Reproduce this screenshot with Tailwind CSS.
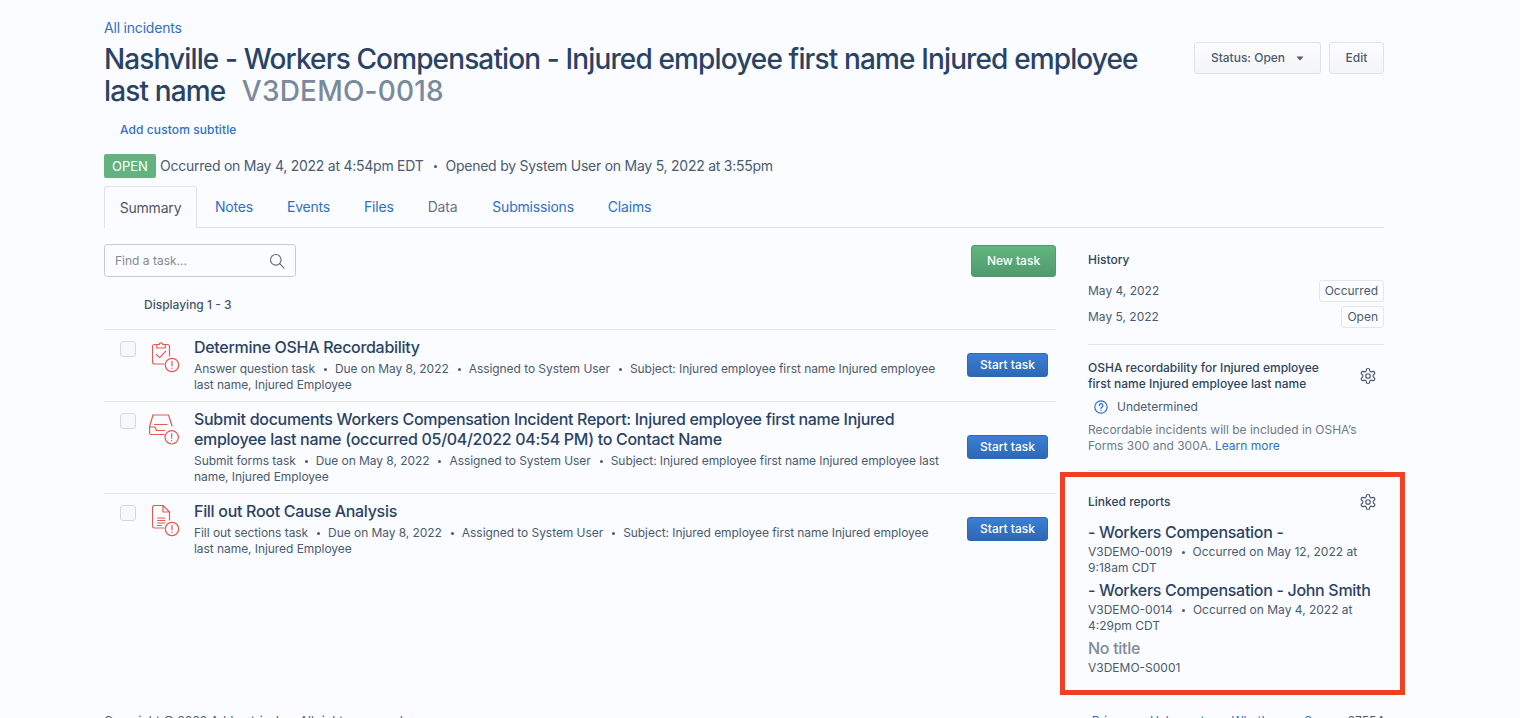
<!DOCTYPE html>
<html>
<head>
<meta charset="utf-8">
<script src="https://cdn.jsdelivr.net/npm/@tailwindcss/browser@4"></script>
</head>
<body class="bg-[#fbfcff] font-['Inter',sans-serif] text-[#2c4563] h-[718px] overflow-hidden relative">
<div class="w-[1280px] ml-[104px] pt-[19px]">
  <a class="block text-[14px] leading-[18px] tracking-[-0.2px] text-[#2f6fc7]">All incidents</a>
  <div class="flex justify-between items-start mt-[3px]">
    <h1 class="w-[1060px] mt-[3px] text-[28px] leading-[32px] font-medium tracking-[-0.87px] text-[#2a4365]">Nashville - Workers Compensation - Injured employee first name Injured employee last name <span class="ml-[10px] text-[#7b8a9a] tracking-[0.2px]">V3DEMO-0018</span></h1>
    <div class="flex gap-[8px] mt-[2px]">
      <button class="h-[32px] w-[127px] flex items-center justify-center gap-[11px] rounded-[3px] border border-[#dfe3e8] bg-gradient-to-b from-[#fcfcfd] to-[#f4f5f7] text-[12px] font-medium text-[#4a5b70]">Status: Open <svg width="8" height="5" viewBox="0 0 8 5"><path d="M0.5 0.5h7L4 4.5z" fill="#4a5b70"/></svg></button>
      <button class="h-[32px] w-[55px] rounded-[3px] border border-[#dfe3e8] bg-gradient-to-b from-[#fcfcfd] to-[#f4f5f7] text-[12px] font-medium text-[#4a5b70]">Edit</button>
    </div>
  </div>
  <a class="block ml-[16px] mt-[14px] text-[12px] leading-[18px] font-medium tracking-[0.1px] text-[#2f6fc7]">Add custom subtitle</a>
  <div class="flex items-center mt-[15px] h-[24px] text-[14px] tracking-[-0.25px] text-[#4a5b70]">
    <span class="w-[52px] h-[24px] pt-[1px] mr-[4px] flex items-center justify-center rounded-[2px] bg-[#62b37f] text-white text-[13px] tracking-normal">OPEN</span>
    <span class="mb-[2px]">Occurred on May 4, 2022 at 4:54pm EDT</span><span class="inline-block w-[3px] h-[3px] ml-[10px] mr-[9px] rounded-full bg-current"></span><span class="mb-[2px]">Opened by System User on May 5, 2022 at 3:55pm</span>
  </div>
  <div class="flex items-end mt-[8px] h-[42px] border-b border-[#dfe3e8] text-[14px] tracking-[-0.2px] text-[#2f6fc7]">
    <div class="h-[42px] w-[93px] -mb-px flex items-center justify-center rounded-t-[3px] border border-b-0 border-[#dfe3e8] bg-[#fbfcff] text-[#4d5663]">Summary</div>
    <div class="h-[41px] flex items-center ml-[18px]">Notes</div>
    <div class="h-[41px] flex items-center ml-[34px]">Events</div>
    <div class="h-[41px] flex items-center ml-[34px]">Files</div>
    <div class="h-[41px] flex items-center ml-[34px] text-[#6b7280]">Data</div>
    <div class="h-[41px] flex items-center ml-[35px]">Submissions</div>
    <div class="h-[41px] flex items-center ml-[34px]">Claims</div>
  </div>
  <div class="flex justify-between mt-[16px]">
    <main class="w-[952px]">
      <div class="flex justify-between items-start">
        <div class="w-[192px] h-[33px] px-[10px] flex items-center justify-between rounded-[3px] border border-[#c9ccd1] text-[12px] text-[#85898f]">
          <span>Find a task...</span>
          <svg width="16" height="16" viewBox="0 0 16 16" fill="none" stroke="#5f6b78" stroke-width="1.1"><circle cx="6.8" cy="6.8" r="5.3"/><path d="M10.7 10.7l4.6 4.6"/></svg>
        </div>
        <button class="h-[32px] w-[85px] mt-[1px] rounded-[3px] border border-[#55996f] bg-gradient-to-b from-[#62b67f] to-[#509a6d] text-[12px] font-medium text-white">New task</button>
      </div>
      <div class="mt-[12px] ml-[40px] h-[32px] text-[12px] leading-[32px] font-medium text-[#44566c]">Displaying 1 - 3</div>
      <div class="mt-[8px]">
        <div class="flex h-[72px] border-t border-[#e3e6ea]">
          <div class="w-[16px] h-[16px] ml-[16px] mt-[11px] rounded-[3px] border border-[#d5d8dd] bg-[#f7f8fa]"></div>
          <div class="w-[58px] pl-[16px] pt-[11px]">
            <svg width="28" height="32" viewBox="0 0 28 32" fill="none" stroke="#e25a53" stroke-width="1.2" stroke-linecap="round" stroke-linejoin="round"><path d="M4.8 3.5H2.5a2 2 0 0 0-2 2V21a2 2 0 0 0 2 2H12"/><path d="M13.2 3.5h2.3a2 2 0 0 1 2 2V15"/><path d="M4.8 7V3.5h2.5a1.7 1.7 0 0 1 3.4 0h2.5V7z"/><path d="M4.5 13.5l3.2 3.2 6-6.5"/><circle cx="20" cy="24" r="6.7"/><path d="M20 20.3v4.5M20 27v.5"/></svg>
          </div>
          <div class="w-[752px] pt-[7px]">
            <div class="text-[16px] leading-[20px] font-medium tracking-[-0.3px] text-[#2a4365]">Determine OSHA Recordability</div>
            <div class="mt-[4px] text-[12px] leading-[16px] tracking-[-0.06px] text-[#4a5b70]">Answer question task<span class="inline-block w-[3px] h-[3px] ml-[9px] mr-[8px] mb-[2px] rounded-full bg-current"></span>Due on May 8, 2022<span class="inline-block w-[3px] h-[3px] ml-[9px] mr-[8px] mb-[2px] rounded-full bg-current"></span>Assigned to System User<span class="inline-block w-[3px] h-[3px] ml-[9px] mr-[8px] mb-[2px] rounded-full bg-current"></span>Subject: Injured employee first name Injured employee last name, Injured Employee</div>
          </div>
          <button class="ml-auto mr-[8px] mt-[23px] h-[24px] w-[81px] rounded-[3px] border border-[#2d69b5] bg-gradient-to-b from-[#3b7fd4] to-[#2e68b4] text-[12px] font-medium text-white">Start task</button>
        </div>
        <div class="flex h-[92px] border-t border-[#e3e6ea]">
          <div class="w-[16px] h-[16px] ml-[16px] mt-[11px] rounded-[3px] border border-[#d5d8dd] bg-[#f7f8fa]"></div>
          <div class="w-[58px] pl-[13px] pt-[12px]">
            <svg width="31" height="31" viewBox="0 0 31 31" fill="none" stroke="#e25a53" stroke-width="1.2" stroke-linecap="round" stroke-linejoin="round"><path d="M4 1h15.5l3.6 11"/><path d="M4 1L0.6 12.5V19a1.5 1.5 0 0 0 1.5 1.5H15"/><path d="M0.6 13H6l1.5 3.5h8"/><path d="M5.5 10.5H18"/><circle cx="22.7" cy="23.3" r="6.7"/><path d="M22.7 19.6v4.5M22.7 26.3v.5"/></svg>
          </div>
          <div class="w-[752px] pt-[7px]">
            <div class="text-[16px] leading-[20px] font-medium tracking-[-0.3px] text-[#2a4365]">Submit documents Workers Compensation Incident Report: Injured employee first name Injured employee last name (occurred 05/04/2022 04:54 PM) to Contact Name</div>
            <div class="mt-[4px] text-[12px] leading-[16px] tracking-[-0.06px] text-[#4a5b70]">Submit forms task<span class="inline-block w-[3px] h-[3px] ml-[9px] mr-[8px] mb-[2px] rounded-full bg-current"></span>Due on May 8, 2022<span class="inline-block w-[3px] h-[3px] ml-[9px] mr-[8px] mb-[2px] rounded-full bg-current"></span>Assigned to System User<span class="inline-block w-[3px] h-[3px] ml-[9px] mr-[8px] mb-[2px] rounded-full bg-current"></span>Subject: Injured employee first name Injured employee last name, Injured Employee</div>
          </div>
          <button class="ml-auto mr-[8px] mt-[33px] h-[24px] w-[81px] rounded-[3px] border border-[#2d69b5] bg-gradient-to-b from-[#3b7fd4] to-[#2e68b4] text-[12px] font-medium text-white">Start task</button>
        </div>
        <div class="flex h-[72px] border-t border-[#e3e6ea]">
          <div class="w-[16px] h-[16px] ml-[16px] mt-[11px] rounded-[3px] border border-[#d5d8dd] bg-[#f7f8fa]"></div>
          <div class="w-[58px] pl-[16px] pt-[11px]">
            <svg width="28" height="32" viewBox="0 0 28 32" fill="none" stroke="#e25a53" stroke-width="1.2" stroke-linecap="round" stroke-linejoin="round"><path d="M12 23H2.5a2 2 0 0 1-2-2V2.5a2 2 0 0 1 2-2H11l6.5 6.5V15"/><path d="M11 .5V7h6.5"/><path d="M5.5 13H13M5.5 15.5H13M5.5 18H13M5.5 20.5h4"/><circle cx="20" cy="24" r="6.7"/><path d="M20 20.3v4.5M20 27v.5"/></svg>
          </div>
          <div class="w-[752px] pt-[7px]">
            <div class="text-[16px] leading-[20px] font-medium tracking-[-0.3px] text-[#2a4365]">Fill out Root Cause Analysis</div>
            <div class="mt-[4px] text-[12px] leading-[16px] tracking-[-0.06px] text-[#4a5b70]">Fill out sections task<span class="inline-block w-[3px] h-[3px] ml-[9px] mr-[8px] mb-[2px] rounded-full bg-current"></span>Due on May 8, 2022<span class="inline-block w-[3px] h-[3px] ml-[9px] mr-[8px] mb-[2px] rounded-full bg-current"></span>Assigned to System User<span class="inline-block w-[3px] h-[3px] ml-[9px] mr-[8px] mb-[2px] rounded-full bg-current"></span>Subject: Injured employee first name Injured employee last name, Injured Employee</div>
          </div>
          <button class="ml-auto mr-[8px] mt-[23px] h-[24px] w-[81px] rounded-[3px] border border-[#2d69b5] bg-gradient-to-b from-[#3b7fd4] to-[#2e68b4] text-[12px] font-medium text-white">Start task</button>
        </div>
      </div>
    </main>
    <aside class="w-[296px] text-[12px] leading-[16px] text-[#4a5b70]">
      <div class="font-medium text-[#2f4560] mt-[8px]">History</div>
      <div class="mt-[12px] flex justify-between items-center h-[22px]"><span>May 4, 2022</span><span class="h-[22px] px-[5px] leading-[20px] rounded-[3px] border border-[#e3e6ea]">Occurred</span></div>
      <div class="mt-[4px] flex justify-between items-center h-[22px]"><span>May 5, 2022</span><span class="h-[22px] px-[5px] leading-[20px] rounded-[3px] border border-[#e3e6ea]">Open</span></div>
      <div class="mt-[16px] border-t border-[#e3e6ea] pt-[15px] flex justify-between items-center">
        <div class="w-[250px] font-medium text-[#2f4560]">OSHA recordability for Injured employee first name Injured employee last name</div>
        <svg class="mr-[7px]" width="18" height="18" viewBox="0 0 24 24" fill="none" stroke="#4a5b70" stroke-width="1.6" stroke-linecap="round" stroke-linejoin="round"><path d="M12.22 2h-.44a2 2 0 0 0-2 2v.18a2 2 0 0 1-1 1.73l-.43.25a2 2 0 0 1-2 0l-.15-.08a2 2 0 0 0-2.73.73l-.22.38a2 2 0 0 0 .73 2.73l.15.1a2 2 0 0 1 1 1.72v.51a2 2 0 0 1-1 1.74l-.15.09a2 2 0 0 0-.73 2.73l.22.38a2 2 0 0 0 2.73.73l.15-.08a2 2 0 0 1 2 0l.43.25a2 2 0 0 1 1 1.73V20a2 2 0 0 0 2 2h.44a2 2 0 0 0 2-2v-.18a2 2 0 0 1 1-1.73l.43-.25a2 2 0 0 1 2 0l.15.08a2 2 0 0 0 2.73-.73l.22-.39a2 2 0 0 0-.73-2.73l-.15-.08a2 2 0 0 1-1-1.74v-.5a2 2 0 0 1 1-1.74l.15-.09a2 2 0 0 0 .73-2.73l-.22-.38a2 2 0 0 0-2.73-.73l-.15.08a2 2 0 0 1-2 0l-.43-.25a2 2 0 0 1-1-1.73V4a2 2 0 0 0-2-2z"/><circle cx="12" cy="12" r="3"/></svg>
      </div>
      <div class="mt-[7px] flex items-center h-[16px]">
        <svg class="ml-[6px] mr-[9px]" width="14" height="14" viewBox="0 0 14 14" fill="none" stroke="#2f6fc7" stroke-width="1.2" stroke-linecap="round"><circle cx="7" cy="7" r="6.2"/><path d="M5.3 5.5a1.8 1.8 0 1 1 2.6 1.6c-.6.3-.9.7-.9 1.3"/><path d="M7 10.2v.2"/></svg>
        <span>Undetermined</span>
      </div>
      <div class="mt-[7px] text-[#6d7a88]">Recordable incidents will be included in OSHA’s Forms 300 and 300A. <a class="text-[#2f6fc7]">Learn more</a></div>
      <div class="mt-[16px] border-t border-[#e3e6ea] pt-[21px] flex justify-between items-center h-[42px]">
        <span class="font-medium text-[#2f4560]">Linked reports</span>
        <svg class="mr-[7px]" width="18" height="18" viewBox="0 0 24 24" fill="none" stroke="#4a5b70" stroke-width="1.6" stroke-linecap="round" stroke-linejoin="round"><path d="M12.22 2h-.44a2 2 0 0 0-2 2v.18a2 2 0 0 1-1 1.73l-.43.25a2 2 0 0 1-2 0l-.15-.08a2 2 0 0 0-2.73.73l-.22.38a2 2 0 0 0 .73 2.73l.15.1a2 2 0 0 1 1 1.72v.51a2 2 0 0 1-1 1.74l-.15.09a2 2 0 0 0-.73 2.73l.22.38a2 2 0 0 0 2.73.73l.15-.08a2 2 0 0 1 2 0l.43.25a2 2 0 0 1 1 1.73V20a2 2 0 0 0 2 2h.44a2 2 0 0 0 2-2v-.18a2 2 0 0 1 1-1.73l.43-.25a2 2 0 0 1 2 0l.15.08a2 2 0 0 0 2.73-.73l.22-.39a2 2 0 0 0-.73-2.73l-.15-.08a2 2 0 0 1-1-1.74v-.5a2 2 0 0 1 1-1.74l.15-.09a2 2 0 0 0 .73-2.73l-.22-.38a2 2 0 0 0-2.73-.73l-.15.08a2 2 0 0 1-2 0l-.43-.25a2 2 0 0 1-1-1.73V4a2 2 0 0 0-2-2z"/><circle cx="12" cy="12" r="3"/></svg>
      </div>
      <div class="mt-[10px] text-[16px] leading-[20px] font-medium tracking-[-0.3px] text-[#2a4365]">- Workers Compensation -</div>
      <div class="w-[280px] mt-[2px]">V3DEMO-0019<span class="inline-block w-[3px] h-[3px] ml-[9px] mr-[8px] mb-[2px] rounded-full bg-current"></span>Occurred on May 12, 2022 at 9:18am CDT</div>
      <div class="mt-[4px] text-[16px] leading-[20px] font-medium tracking-[-0.3px] text-[#2a4365]">- Workers Compensation - John Smith</div>
      <div class="w-[280px] mt-[2px]">V3DEMO-0014<span class="inline-block w-[3px] h-[3px] ml-[9px] mr-[8px] mb-[2px] rounded-full bg-current"></span>Occurred on May 4, 2022 at 4:29pm CDT</div>
      <div class="mt-[4px] text-[16px] leading-[20px] font-medium tracking-[-0.3px] text-[#7f8b99]">No title</div>
      <div class="mt-[2px]">V3DEMO-S0001</div>
    </aside>
  </div>
</div>
<footer class="absolute top-[713px] left-[104px] w-[1280px] flex justify-between text-[12px] leading-[16px] text-[#4a5b70]">
  <span>Copyright © 2022 Addmotriv, Inc. All rights reserved.</span>
  <span class="flex"><a class="text-[#2f6fc7]">Privacy</a><a class="ml-[16px] text-[#2f6fc7]">Help center</a><a class="ml-[16px] text-[#2f6fc7]">What's new</a><span class="ml-[6px]"><a class="text-[#2f6fc7]">Secure</a> 27554</span></span>
</footer>
<div class="absolute left-[1060px] top-[472px] w-[345px] h-[223px] border-[5px] border-[#ee4023] pointer-events-none"></div>
</body>
</html>
